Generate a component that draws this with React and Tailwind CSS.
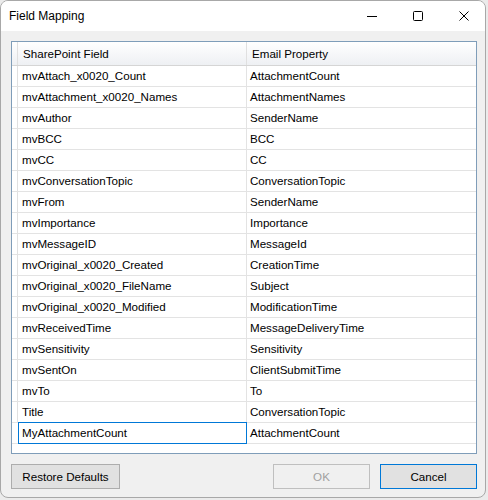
import React from "react";

const rows = [
  ["mvAttach_x0020_Count", "AttachmentCount"],
  ["mvAttachment_x0020_Names", "AttachmentNames"],
  ["mvAuthor", "SenderName"],
  ["mvBCC", "BCC"],
  ["mvCC", "CC"],
  ["mvConversationTopic", "ConversationTopic"],
  ["mvFrom", "SenderName"],
  ["mvImportance", "Importance"],
  ["mvMessageID", "MessageId"],
  ["mvOriginal_x0020_Created", "CreationTime"],
  ["mvOriginal_x0020_FileName", "Subject"],
  ["mvOriginal_x0020_Modified", "ModificationTime"],
  ["mvReceivedTime", "MessageDeliveryTime"],
  ["mvSensitivity", "Sensitivity"],
  ["mvSentOn", "ClientSubmitTime"],
  ["mvTo", "To"],
  ["Title", "ConversationTopic"],
];

export default function App() {
  return (
    <div
      className="w-[488px] h-[500px] bg-[#ebebeb] text-[11.6px] text-[#000]"
      style={{ fontFamily: '"Liberation Sans", Arial, sans-serif' }}
    >
      <div className="w-[486px] h-[498px] rounded-[8px] border border-[#a8a8a8] bg-[#f0f0f0] overflow-hidden flex flex-col">
        {/* Title bar */}
        <div className="h-[30px] bg-white flex items-center shrink-0">
          <div className="pl-[8px] flex-1 text-[12px] leading-none">Field Mapping</div>
          <div className="flex h-full">
            <div className="w-[46px] h-full flex items-center justify-center pl-[4px]">
              <svg width="10" height="10" viewBox="0 0 10 10">
                <path d="M0 5.5H10" stroke="#000" strokeWidth="1" />
              </svg>
            </div>
            <div className="w-[46px] h-full flex items-center justify-center pl-[4px]">
              <svg width="10" height="10" viewBox="0 0 10 10">
                <rect x="0.5" y="0.5" width="9" height="9" rx="1" fill="none" stroke="#000" strokeWidth="1" />
              </svg>
            </div>
            <div className="w-[46px] h-full flex items-center justify-center pl-[4px]">
              <svg width="10" height="10" viewBox="0 0 10 10">
                <path d="M0.5 0.5L9.5 9.5M9.5 0.5L0.5 9.5" stroke="#000" strokeWidth="1" />
              </svg>
            </div>
          </div>
        </div>

        {/* Body */}
        <div className="flex-1 flex flex-col pt-[10px] pl-[10px] pr-[8px]">
          <div className="h-[413px] border border-[#7f9db9] bg-white flex flex-col">
            {/* Header */}
            <div className="h-[24px] flex border-b border-[#d5d5d5] bg-gradient-to-b from-white to-[#eef0f3] shrink-0">
              <div className="w-[6px] border-r border-[#e0e0e0]" />
              <div className="w-[229px] border-r border-[#e0e0e0] pl-[5px] flex items-center">SharePoint Field</div>
              <div className="flex-1 pl-[5px] flex items-center">Email Property</div>
            </div>
            {rows.map(([a, b], i) => (
              <div key={i} className="h-[21px] flex border-b border-[#e3e3e3] shrink-0">
                <div className="w-[6px] border-r border-[#e0e0e0]" />
                <div className="w-[229px] border-r border-[#e3e3e3] pl-[4px] flex items-center">{a}</div>
                <div className="flex-1 pl-[3px] flex items-center">{b}</div>
              </div>
            ))}
            <div className="h-[21px] flex border-b border-[#e3e3e3] shrink-0">
              <div className="w-[6px]" />
              <div className="w-[229px] -mt-px h-[22px] border border-[#0078d7] pl-[3px] flex items-center">
                MyAttachmentCount
              </div>
              <div className="flex-1 pl-[3px] flex items-center">AttachmentCount</div>
            </div>
            <div className="flex-1" />
          </div>

          {/* Buttons */}
          <div className="mt-[10px] flex items-start">
            <button className="w-[109px] h-[25px] border border-[#adadad] bg-[#e1e1e1] flex items-center justify-center">
              Restore Defaults
            </button>
            <div className="flex-1" />
            <button className="w-[97px] h-[25px] border border-[#bfbfbf] bg-[#f0f0f0] text-[#a0a0a0] flex items-center justify-center">
              OK
            </button>
            <button className="ml-[10px] w-[97px] h-[25px] border border-[#0078d7] bg-[#e1e1e1] flex items-center justify-center">
              Cancel
            </button>
          </div>
        </div>
      </div>
    </div>
  );
}
